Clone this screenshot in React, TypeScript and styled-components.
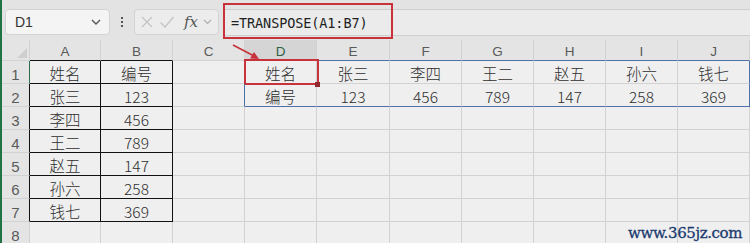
import React from "react";
import styled, { createGlobalStyle, css } from "styled-components";

const GlobalStyle = createGlobalStyle`
  html, body {
    margin: 0;
    padding: 0;
    background: #e6e6e6;
  }
  body {
    font-family: "Noto Sans CJK SC", "Noto Sans", sans-serif;
  }
`;

const COLS = ["A", "B", "C", "D", "E", "F", "G", "H", "I", "J"];
const WIDTHS = [71, 72, 72, 72, 73, 72, 72, 72, 72, 72];

const names = ["姓名", "张三", "李四", "王二", "赵五", "孙六", "钱七"];
const nums = ["编号", "123", "456", "789", "147", "258", "369"];

const RED = "#c7323b";
const BLUE = "#4d70a8";
const GRID = "#d2d2d2";

function Page() {
  const rows = 8;

  const cellText = (r: number, c: number) => {
    if (r < 7 && c === 0) return names[r];
    if (r < 7 && c === 1) return nums[r];
    if (r === 0 && c >= 3) return names[c - 3];
    if (r === 1 && c >= 3) return nums[c - 3];
    return "";
  };

  const rightColor = (r: number, c: number) => {
    if (r < 7 && c <= 1) return "#111";
    if (r < 2 && c === 2) return BLUE;
    if (r < 2 && c === 9) return BLUE;
    return GRID;
  };

  const bottomColor = (r: number, c: number) => {
    if (r < 7 && c <= 1) return "#111";
    if (r === 1 && c >= 3) return BLUE;
    return GRID;
  };

  return (
    <Window>
      <Toolbar>
        <NameBox>
          <span>D1</span>
          <Chevron viewBox="0 0 10 6" $size={10}>
            <path d="M1 1 L5 5 L9 1" />
          </Chevron>
        </NameBox>
        <Dots>
          <i />
          <i />
          <i />
        </Dots>
        <FxBox>
          <svg width="14" height="14" viewBox="0 0 14 14">
            <path d="M2 2 L12 12 M12 2 L2 12" stroke="#c4c4c4" strokeWidth="1.3" fill="none" />
          </svg>
          <svg width="16" height="14" viewBox="0 0 16 14">
            <path d="M1.5 7.5 L6 12 L14.5 2" stroke="#c4c4c4" strokeWidth="1.3" fill="none" />
          </svg>
          <Fx>fx</Fx>
          <Chevron viewBox="0 0 10 6" $size={9} $light>
            <path d="M1 1 L5 5 L9 1" />
          </Chevron>
        </FxBox>
        <FormulaStrip>
          <FormulaInput>=TRANSPOSE(A1:B7)</FormulaInput>
        </FormulaStrip>
      </Toolbar>

      <Sheet>
        <Corner>
          <svg width="10" height="10" viewBox="0 0 10 10">
            <path d="M10 0 L10 10 L0 10 Z" fill="#cfcfcf" />
          </svg>
        </Corner>
        {COLS.map((c, i) => (
          <ColHead
            key={c}
            $active={c === "D"}
            $bottom={i <= 1 ? "#111" : i >= 3 ? BLUE : GRID}
            style={{ width: WIDTHS[i] }}
          >
            {c}
          </ColHead>
        ))}
        {Array.from({ length: rows }).map((_, r) => (
          <React.Fragment key={r}>
            <RowHead $edge={r === 0 ? "#2c6e49" : r < 7 ? "#111" : GRID}>{r + 1}</RowHead>
            {COLS.map((c, i) => (
              <Cell
                key={c + r}
                $right={rightColor(r, i)}
                $bottom={bottomColor(r, i)}
                $active={r === 0 && i === 3}
              >
                {cellText(r, i)}
              </Cell>
            ))}
          </React.Fragment>
        ))}
        <Arrow width="40" height="24" viewBox="0 0 40 24">
          <line x1="3" y1="2" x2="26" y2="14" stroke={RED} strokeWidth="1.6" />
          <path d="M29 16 L20 15.5 L24 9 Z" fill={RED} />
        </Arrow>
        <Watermark>www.365jz.com</Watermark>
      </Sheet>
    </Window>
  );
}

export default function App() {
  return (
    <>
      <GlobalStyle />
      <Page />
    </>
  );
}

const Window = styled.div`
  width: 750px;
  height: 243px;
  overflow: hidden;
  border-left: 2px solid #217346;
  box-sizing: border-box;
  background: #e6e6e6;
`;

const Toolbar = styled.div`
  height: 40px;
  display: flex;
  align-items: center;
  background: #e3e3e3;
  padding-left: 3px;
  box-sizing: border-box;
`;

const NameBox = styled.div`
  width: 105px;
  height: 26px;
  margin-top: 3px;
  box-sizing: border-box;
  border: 1px solid #d3d3d3;
  border-radius: 4px;
  background: #f4f4f4;
  display: flex;
  align-items: center;
  justify-content: space-between;
  padding: 0 8px 0 9px;
  font-family: "Liberation Sans", Arial, sans-serif;
  font-size: 14px;
  color: #333;
`;

const Chevron = styled.svg<{ $size: number; $light?: boolean }>`
  width: ${(p) => p.$size}px;
  height: ${(p) => p.$size * 0.6}px;
  fill: none;
  stroke: ${(p) => (p.$light ? "#b0b0b0" : "#555")};
  stroke-width: 1.4;
`;

const Dots = styled.div`
  width: 24px;
  margin-top: 3px;
  display: flex;
  flex-direction: column;
  align-items: center;
  gap: 2px;

  i {
    width: 2px;
    height: 2px;
    background: #555;
    display: block;
  }
`;

const FxBox = styled.div`
  width: 85px;
  height: 26px;
  margin-top: 3px;
  box-sizing: border-box;
  border: 1px solid #d3d3d3;
  border-radius: 4px;
  background: #ececec;
  display: flex;
  align-items: center;
  gap: 5px;
  padding-left: 5px;
`;

const Fx = styled.span`
  font-family: "DejaVu Serif", "Liberation Serif", serif;
  font-style: italic;
  font-size: 15px;
  color: #555;
  margin-left: 4px;
`;

const FormulaStrip = styled.div`
  flex: 1;
  align-self: stretch;
  margin-top: 9px;
  margin-bottom: 4px;
  margin-left: 4px;
  border-top: 1px solid #cfcfcf;
  border-bottom: 1px solid #cfcfcf;
  background: #ebebeb;
  display: flex;
  align-items: center;
  position: relative;
`;

const FormulaInput = styled.div`
  padding-left: 8px;
  font-family: "DejaVu Sans Mono", "Liberation Mono", monospace;
  font-size: 13.5px;
  letter-spacing: -0.1px;
  color: #222;
  width: 170px;
  box-sizing: border-box;
  position: relative;

  &::after {
    content: "";
    position: absolute;
    left: 0;
    top: -12px;
    width: 170px;
    height: 36px;
    border: 2px solid ${RED};
    box-sizing: border-box;
  }
`;

const Sheet = styled.div`
  position: relative;
  display: grid;
  grid-template-columns: 28px 71px 72px 72px 72px 73px 72px 72px 72px 72px 72px;
  grid-auto-rows: 23px;
  grid-template-rows: 21px;
  background: #efefef;
`;

const headBase = css`
  background: #e4e4e4;
  color: #5a5a5a;
  font-family: "Liberation Sans", Arial, sans-serif;
  font-size: 13.5px;
  display: flex;
  align-items: center;
  justify-content: center;
  box-sizing: border-box;
`;

const Corner = styled.div`
  ${headBase};
  border-right: 1px solid ${GRID};
  border-bottom: 1px solid ${GRID};
  align-items: flex-end;
  justify-content: flex-end;
  padding: 0 2px 2px 0;
`;

const ColHead = styled.div<{ $active?: boolean; $bottom: string }>`
  ${headBase};
  border-right: 1px solid ${GRID};
  border-bottom: 1px solid ${(p) => p.$bottom};
  padding-top: 2px;
  ${(p) =>
    p.$active &&
    css`
      background: #d5d5d5;
      color: #2f5f45;
    `}
`;

const RowHead = styled.div<{ $edge: string }>`
  ${headBase};
  border-right: 1px solid ${(p) => p.$edge};
  border-bottom: 1px solid ${GRID};
  font-size: 15px;
  padding-top: 4px;
`;

const Cell = styled.div<{ $right: string; $bottom: string; $active?: boolean }>`
  position: relative;
  box-sizing: border-box;
  border-right: 1px solid ${(p) => p.$right};
  border-bottom: 1px solid ${(p) => p.$bottom};
  display: flex;
  align-items: center;
  justify-content: center;
  font-family: "Noto Sans CJK SC", "Noto Sans", sans-serif;
  font-size: 15.5px;
  font-weight: 300;
  color: #2e2e2e;
  padding-top: 1px;

  ${(p) =>
    p.$active &&
    css`
      &::after {
        content: "";
        position: absolute;
        left: -1px;
        top: -2px;
        right: -3px;
        bottom: -2px;
        border: 2px solid ${RED};
      }
      &::before {
        content: "";
        position: absolute;
        right: -4px;
        bottom: -4px;
        width: 5px;
        height: 5px;
        background: #8e2a2f;
        z-index: 1;
      }
    `}
`;

const Arrow = styled.svg`
  position: absolute;
  left: 228px;
  top: 3px;
`;

const Watermark = styled.div`
  position: absolute;
  right: 8px;
  bottom: 3px;
  font-family: "DejaVu Serif", "Liberation Serif", serif;
  font-size: 15px;
  color: #1c3a70;
  letter-spacing: -0.4px;
  -webkit-text-stroke: 0.3px #1c3a70;
`;
